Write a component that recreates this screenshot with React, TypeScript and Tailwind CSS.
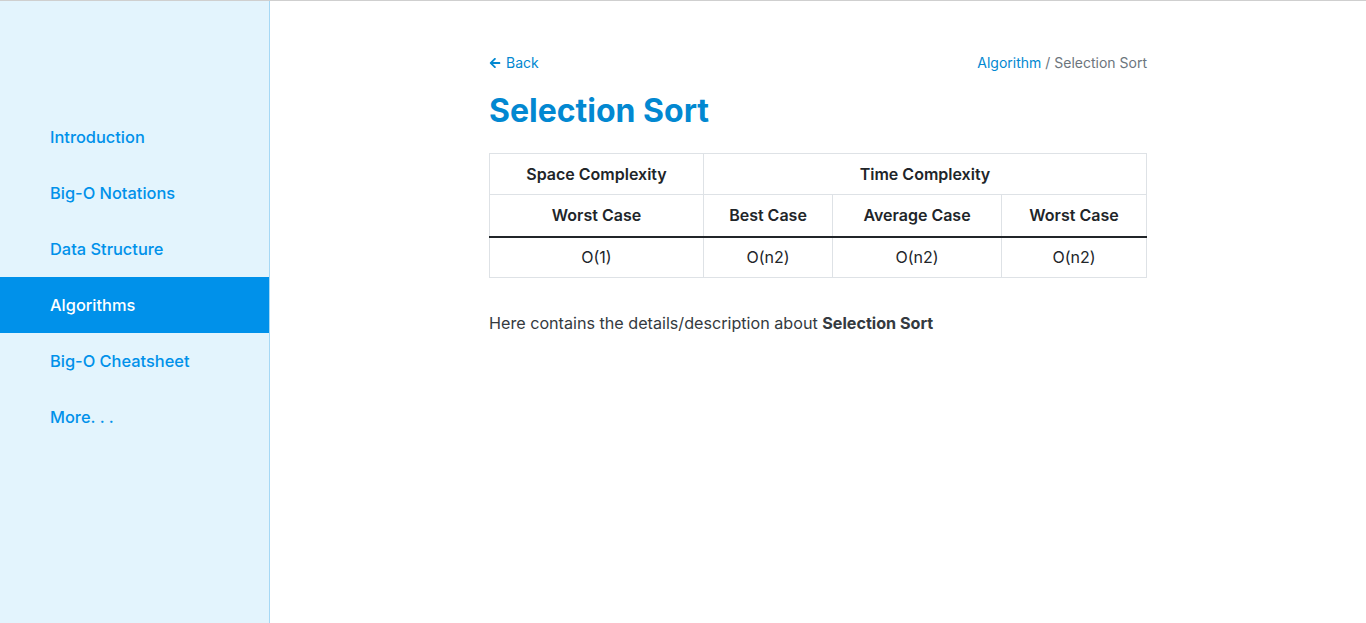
import React from 'react';
import { FaArrowLeft } from 'react-icons/fa';

const NAV = ['Introduction', 'Big-O Notations', 'Data Structure', 'Algorithms', 'Big-O Cheatsheet', 'More. . .'];

const CASES = [
  { label: 'Worst Case', value: 'O(1)', w: 'w-[214px]' },
  { label: 'Best Case', value: 'O(n2)', w: 'w-[129px]' },
  { label: 'Average Case', value: 'O(n2)', w: 'w-[169px]' },
  { label: 'Worst Case', value: 'O(n2)', w: '' },
];

export default function App() {
  const active = 'Algorithms';
  return (
    <div
      className="flex h-[623px] w-full border-t border-[#cfcfcf] bg-white text-[#212529]"
      style={{ fontFamily: 'Inter, "Noto Sans", sans-serif' }}
    >
      {/* Sidebar */}
      <aside className="w-[270px] shrink-0 border-r border-[#a6d8f5] bg-[#e3f4fd] pt-[108px]">
        <nav className="flex flex-col">
          {NAV.map((item) => (
            <a
              key={item}
              className={
                'flex h-[56px] items-center pl-[50px] text-[16.4px] font-medium ' +
                (item === active ? 'bg-[#0091ea] text-white' : 'text-[#0091ea]')
              }
            >
              {item}
            </a>
          ))}
        </nav>
      </aside>

      {/* Main */}
      <main className="flex-1">
        <div className="mx-auto w-[658px] pt-[52px]">
          <div className="flex items-center justify-between text-[14px] leading-5">
            <a className="flex items-center gap-[5px] text-[#0288d1]">
              <FaArrowLeft className="h-[12px] w-[12px]" />
              Back
            </a>
            <div>
              <a className="text-[#0288d1]">Algorithm</a>
              <span className="text-[#6c757d]"> / Selection Sort</span>
            </div>
          </div>

          <h1 className="mt-[19px] text-[32px] font-bold leading-[38px] text-[#0288d1]">Selection Sort</h1>

          <table className="mt-[23px] w-full border-collapse text-center text-[16px]">
            <thead>
              <tr className="h-[41px]">
                <th className="border border-[#dee2e6] font-semibold">Space Complexity</th>
                <th colSpan={3} className="border border-[#dee2e6] font-semibold">
                  Time Complexity
                </th>
              </tr>
              <tr className="h-[42px]">
                {CASES.map((c, i) => (
                  <th
                    key={i}
                    className={'border border-b-2 border-[#dee2e6] border-b-[#212529] font-semibold ' + c.w}
                  >
                    {c.label}
                  </th>
                ))}
              </tr>
            </thead>
            <tbody>
              <tr className="h-[41px]">
                {CASES.map((c, i) => (
                  <td key={i} className="border border-[#dee2e6] font-normal">
                    {c.value}
                  </td>
                ))}
              </tr>
            </tbody>
          </table>

          <p className="mt-[33px] text-[16.15px] text-[#343a40]">
            Here contains the details/description about <b className="font-bold">Selection Sort</b>
          </p>
        </div>
      </main>
    </div>
  );
}
